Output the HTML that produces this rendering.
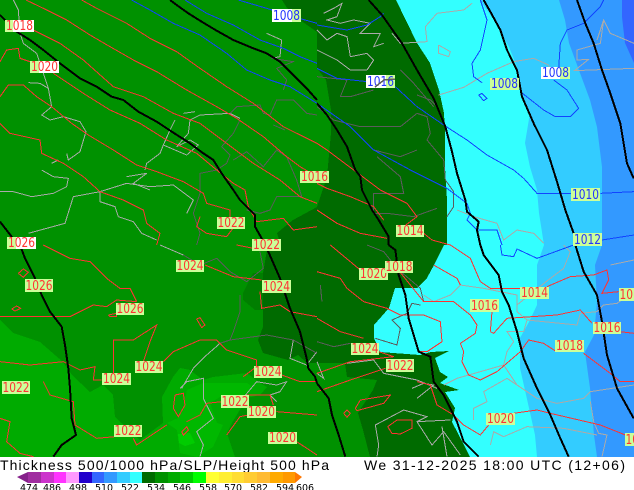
<!DOCTYPE html>
<html><head><meta charset="utf-8"><style>
html,body{margin:0;padding:0;background:#fff;width:634px;height:490px;overflow:hidden}
svg{display:block}
polyline{vector-effect:non-scaling-stroke;fill:none}
.k polyline{stroke:#000;stroke-width:2}
.r polyline{stroke:#ff3333;stroke-width:1}
.g polyline{stroke:#aaaaaa;stroke-width:1}
.d polyline{stroke:#5c5c5c;stroke-width:1}
.b polyline{stroke:#1144ff;stroke-width:1}
.lab text{font:13.5px "DejaVu Sans",sans-serif;text-anchor:middle;fill:#ff3333}
.lab text.u{fill:#2233ff}
.lab rect{fill:#ccff99}
.lab rect.w{fill:#fff}
.leg text{font:9.5px "DejaVu Sans",sans-serif;fill:#000}
.ttl{font:14px "Liberation Sans",sans-serif;fill:#000}
</style></head><body>
<svg width="634" height="490" viewBox="0 0 634 490" xmlns="http://www.w3.org/2000/svg">
<rect width="634" height="457" fill="#3399ff"/>
<polygon points="622,0 634,0 634,63 625,43 622,17" fill="#3366ff"/>
<polygon points="0,0 559,0 565,20 569,43 580,73 590,100 597,127 602,167 602,245 595,265 597,302 594,335 585,352 590,388 594,435 597,457 0,457" fill="#33ccff"/>
<polygon points="0,0 480,0 494,20 509,47 517,67 520,90 530,113 525,143 530,167 537,190 539,213 544,245 537,265 537,305 529,322 520,338 520,368 529,408 535,435 537,457 0,457" fill="#33ffff"/>
<polygon shape-rendering="crispEdges" points="0,0 396,0 417,43 430,63 439,90 444,113 445,133 445,167 447,200 447,245 444,245 434,265 427,278 417,288 395,288 389,308 374,325 374,338 380,352 420,355 431,352 449,351 435,358 440,372 448,377 440,383 459,390 445,392 455,408 452,422 464,445 470,457 0,457" fill="#006b00"/>
<polygon shape-rendering="crispEdges" points="0,0 282,0 287,8 300,20 317,32 317,68 326,80 331,110 331,133 327,177 317,207 293,220 277,233 280,243 267,250 263,273 263,310 263,327 258,340 263,353 288,360 298,355 307,363 345,363 347,377 377,380 373,390 358,413 363,430 370,457 0,457" fill="#009100"/>
<polygon shape-rendering="crispEdges" points="263,273 253,273 243,293 243,300 255,310 263,310" fill="#007e00"/>
<polygon shape-rendering="crispEdges" points="0,320 13,333 40,342 63,362 72,375 90,392 103,385 113,395 115,417 140,440 163,423 162,397 173,377 180,368 190,370 203,380 213,377 247,373 260,383 267,387 260,395 247,398 232,423 227,433 235,457 0,457" fill="#00ab00"/>
<polygon shape-rendering="crispEdges" points="187,390 203,383 213,383 247,383 253,387 243,395 220,397 210,403 217,423 223,425 213,447 197,457 180,453 177,430 167,423 178,418 183,410" fill="#00b800"/>
<polygon shape-rendering="crispEdges" points="178,434 190,433 195,443 185,446 179,443" fill="#00cc00"/>

<g shape-rendering="crispEdges">
<!-- Q1 -->
<g transform="scale(.33333)">
<g class="g">
<polyline points="40,0 55,30 60,100 70,130 110,160 130,220 145,265 120,250 85,248"/>
<polyline points="145,265 155,320 125,345 150,360 190,350 240,365 258,395 240,455 205,480 200,460"/>
<polyline points="175,480 155,490"/>
<polyline points="125,510 160,530 205,535 200,560 160,580 95,590 40,575 0,575"/>
<polyline points="300,575 220,590 195,670 85,700"/>
<polyline points="300,575 300,605 345,620 355,650 400,665 425,700 470,720"/>
<polyline points="300,575 380,550 450,560 520,555 580,600 560,640"/>
<polyline points="435,510 440,490 480,460 490,435 510,390 525,360"/>
<polyline points="490,435 560,465 595,435 570,420 530,440 565,400 570,360"/>
<polyline points="550,340 585,335"/>
<polyline points="570,360 600,345 690,340 720,355"/>
<polyline points="380,530 440,520 400,550 450,570"/>
<polyline points="800,100 845,120 840,170 815,175"/>
</g>
<g class="d">
<polyline points="690,340 710,320 780,315 790,340 810,345 830,300 880,300 920,340 951,345"/>
<polyline points="720,360 700,400 665,440 690,465 680,490 650,510 600,520 600,580 580,640 600,700 590,735"/>
<polyline points="700,480 740,455 790,500 830,450 860,470 890,540 905,590 830,590 810,630 780,640 740,630"/>
<polyline points="820,375 855,390"/>
<polyline points="815,175 880,185 830,205 860,240 850,270"/>
</g>
<g class="b">
<polyline points="395,0 450,30 520,70 600,105 680,160 740,210 810,240 870,260 951,310"/>
<polyline points="555,0 620,40 700,75 780,120 850,145 900,170 951,190"/>
<polyline points="715,0 800,25 880,50 951,70"/>
</g>
<g class="r">
<polyline points="78,0 130,25 200,60 270,105 330,140 400,180 470,215 560,270 650,320 710,355 790,410 860,470 900,500 951,530"/>
<polyline points="245,0 290,25 380,70 450,115 530,155 600,205 680,260 760,310 850,380 951,430"/>
<polyline points="100,90 180,130 250,180 340,260 430,290 520,340 600,370 680,430 760,490 840,540 900,590 951,610"/>
<polyline points="160,220 250,280 330,330 420,370 500,420 590,460 650,510 700,550 735,570 745,620 770,665 850,655 880,690 951,680"/>
<polyline points="0,185 20,150 55,145 60,175 90,185"/>
<polyline points="0,290 25,255 70,255 110,290 155,320 215,370 265,405 340,450 410,495 470,515 550,545 610,580 620,610 690,630 690,670"/>
<polyline points="0,370 30,400 120,420 125,460 190,490 250,530 300,575 370,600 430,630 440,670 480,700 470,735"/>
<polyline points="600,650 590,680 620,700 680,710 710,670"/>
</g>
<g class="k">
<polyline points="0,45 15,60 50,95 90,120 130,150 180,190 240,235 290,260 335,290 370,300 415,335 470,365 520,398 570,430 610,460 640,480 665,520 700,570 720,600 765,645 765,680 785,715 805,755"/>
<polyline points="510,0 530,15 565,40 600,62 650,92 700,120 760,145 800,160 840,185 880,225 920,265 951,300"/>
<polyline points="0,665 35,710 60,735"/>
</g>
</g>
<!-- Q2 -->
<g transform="translate(317,0) scale(.33333)">
<g class="g">
<polyline points="0,90 30,120 60,100 90,110 100,170 150,160 170,180 150,210"/>
<polyline points="0,150 60,180 100,210 150,210"/>
<polyline points="20,40 50,25 75,10 60,50 30,60 70,70 110,60 160,70 130,100 190,100 170,140 200,130"/>
<polyline points="225,100 250,130 330,125 325,80 360,40 440,30 465,10"/>
<polyline points="365,135 400,155 395,170 365,160 365,135"/>
<polyline points="365,285 440,262 510,220 590,185 650,175 695,195 700,220"/>
<polyline points="770,212 951,205"/>
<polyline points="775,210 815,178 780,180 780,150 850,130 860,60 880,100 951,130"/>
<polyline points="860,60 840,120"/>
<polyline points="420,630 470,650 540,670 560,720 600,690 650,700 680,730"/>
</g>
<g class="d">
<polyline points="0,230 90,240 70,290 100,290 170,270"/>
<polyline points="250,210 290,250 350,320"/>
<polyline points="300,285 340,300 360,320"/>
<polyline points="0,320 50,360 130,380 250,380 300,340 330,350 340,400 330,420 380,480 385,540 410,575 410,620 390,650"/>
<polyline points="170,450 250,470 300,450"/>
<polyline points="180,470 250,530 260,580 170,580 170,640 210,640 290,650 360,625"/>
</g>
<g class="b">
<polyline points="0,75 90,90 150,75 190,50 200,40"/>
<polyline points="0,205 60,235 150,245"/>
<polyline points="235,260 300,320 380,375 450,420 510,465 590,510 620,535 660,580 765,580"/>
<polyline points="850,580 951,575"/>
<polyline points="0,310 100,380 170,450 280,510 390,565 450,610 460,640 450,660 480,690 540,690 555,735"/>
<polyline points="490,0 510,60 490,150 465,190 470,230 495,248"/>
<polyline points="610,275 680,330 715,350 760,350 785,325 750,270 710,240"/>
<polyline points="725,205 730,130 750,90 800,70 850,20 860,0"/>
<polyline points="485,285 495,280 510,295 500,302 485,285"/>
<polyline points="855,720 951,705"/>
</g>
<g class="r">
<polyline points="0,430 30,450 110,510 190,570 270,610 300,650 260,680"/>
<polyline points="0,550 30,565 100,590 170,620 200,660"/>
<polyline points="0,630 60,670 130,700 210,715"/>
<polyline points="320,700 345,720 400,735"/>
</g>
<g class="k">
<polyline points="0,310 30,345 60,390 90,440 115,510 130,530 135,570 165,630 185,660 215,710 215,735"/>
<polyline points="155,0 195,45 255,130 300,210 350,295 385,380 405,455 420,520 445,600 450,635 485,665 480,690 490,735"/>
<polyline points="500,0 520,35 550,90 570,150 600,210 615,290 650,370 690,450 720,545 745,630 770,700"/>
<polyline points="780,0 805,70 830,130 855,210 880,280 910,370 930,490 950,535"/>
</g>
</g>
<!-- Q3 -->
<g transform="translate(0,245) scale(.33333)">
<g class="g">
<polyline points="480,0 550,30"/>
<polyline points="660,295 620,330 580,370 545,430"/>
<polyline points="540,430 560,410 610,400 610,460 640,520 590,560 610,600 600,635"/>
<polyline points="880,285 870,340 920,360 951,320"/>
<polyline points="720,470 770,410 830,420 860,410 840,440 810,450 830,470"/>
</g>
<g class="d">
<polyline points="550,30 600,60 650,40 690,80 740,110 790,70 780,20"/>
<polyline points="720,150 720,200 700,260 690,285 660,295"/>
<polyline points="690,285 800,270 880,285 951,325"/>
</g>
<g class="r">
<polyline points="130,0 210,40 270,50 320,100 360,130 390,130 410,170"/>
<polyline points="0,215 120,215 210,215 280,180 320,185 350,165 410,170"/>
<polyline points="0,350 90,360 190,350 240,375 285,365 280,405 305,405"/>
<polyline points="340,400 340,285 400,285 470,240 450,290 430,350"/>
<polyline points="490,350 520,320 600,285 650,285 680,315 770,345 770,365 730,395"/>
<polyline points="130,410 150,450 220,470 225,540 290,580 345,575"/>
<polyline points="0,520 30,530 20,590 60,625 100,635"/>
<polyline points="400,580 410,600 500,540"/>
<polyline points="560,530 600,510 620,475 665,470"/>
<polyline points="740,450 810,450 820,480"/>
<polyline points="830,500 951,510"/>
<polyline points="680,570 720,515 745,510"/>
<polyline points="890,590 951,630"/>
<polyline points="780,140 785,190 840,180 870,200 951,215"/>
<polyline points="710,0 760,10"/>
<polyline points="615,60 700,95 785,105"/>
<polyline points="845,390 900,410 951,410"/>
<polyline points="525,450 550,445 555,480 535,515 520,490 525,450"/>
<polyline points="545,560 560,545 565,555 550,570 545,560"/>
<polyline points="55,85 70,72 85,82 70,97 55,85"/>
<polyline points="35,192 50,183 62,190 45,198 35,192"/>
<polyline points="590,222 600,218 615,240 605,248 590,222"/>
<polyline points="325,210 350,205 350,215 330,215 325,210"/>
</g>
<g class="k">
<polyline points="60,0 75,40 105,100 125,150 150,200 185,245 195,300 205,370 210,430 215,520 228,570 185,600 160,635"/>
<polyline points="805,20 840,100 870,190 900,260 920,340 925,370 945,395 951,415"/>
</g>
</g>
<!-- Q4 -->
<g transform="translate(317,245) scale(.33333)">
<g class="g">
<polyline points="320,150 350,170 400,150 430,120 500,130 600,150 600,200 630,225 620,260 570,260 590,290 570,320 560,360 420,400 380,420"/>
<polyline points="560,360 600,420 570,400 500,440 510,470 470,490 470,525"/>
<polyline points="600,420 660,460 720,475 800,460 820,440 951,420"/>
<polyline points="820,470 830,530 845,565 870,570 855,635"/>
<polyline points="520,600 530,560 560,575 630,545 740,550 840,570"/>
<polyline points="630,225 780,240 790,205 840,200 860,180 900,175 951,140"/>
<polyline points="600,180 700,100 740,70 760,20 740,0"/>
<polyline points="880,60 951,45"/>
<polyline points="175,540 260,495 330,515 300,530 345,600 380,560 430,630"/>
<polyline points="175,540 185,600 180,635"/>
<polyline points="300,530 400,525"/>
<polyline points="375,545 390,635"/>
<polyline points="285,430 320,415 350,420 300,460"/>
<polyline points="0,350 20,400 0,385"/>
<polyline points="90,355 170,345 200,385 300,405 360,430"/>
</g>
<g class="d">
<polyline points="0,290 50,305 100,295"/>
<polyline points="10,120 15,170"/>
<polyline points="175,280 240,300 250,250 225,225 270,205 285,175 310,180"/>
<polyline points="150,0 200,20 240,70 310,130 320,170"/>
</g>
<g class="b">
<polyline points="550,0 555,30 590,35 600,12 660,40 770,0"/>
</g>
<g class="r">
<polyline points="40,0 100,50 130,75"/>
<polyline points="0,80 70,100 90,130 140,170 210,190 250,210 320,210 370,230 375,290 330,320 305,320"/>
<polyline points="240,70 320,170 410,170 460,210 480,240 475,265 430,295 440,320 435,350 455,390 490,405 540,380 610,320 635,285 680,295 715,318"/>
<polyline points="350,60 420,100 430,120"/>
<polyline points="400,0 460,40 490,110 520,130 610,130"/>
<polyline points="690,125 760,95 830,90 870,75 875,105 855,145 905,140"/>
<polyline points="520,260 525,200"/>
<polyline points="520,260 530,265 570,220 720,210 790,195 825,235"/>
<polyline points="910,260 951,265"/>
<polyline points="800,325 880,385 910,410 951,410"/>
<polyline points="0,220 70,260 140,280"/>
<polyline points="185,320 230,335 100,350 0,385"/>
<polyline points="205,370 100,405 0,440"/>
<polyline points="300,410 340,420 360,480 410,510 440,540 490,570 515,540"/>
<polyline points="590,505 660,495 700,505 850,540 925,570"/>
<polyline points="115,490 130,465 220,450 200,475 120,497 115,490"/>
<polyline points="80,505 90,495 100,505 90,517 80,505"/>
<polyline points="212,545 240,525 285,525 285,550 250,567 225,565 212,545"/>
</g>
<g class="k">
<polyline points="0,415 35,460 45,510 65,570 85,635"/>
<polyline points="215,0 235,15 245,90 265,150 275,220 290,270 305,320 340,335 350,410 380,450 420,530 440,590 485,635"/>
<polyline points="490,0 500,30 545,90 555,140 575,180 600,260 620,340 660,430 700,510 730,580 755,635"/>
<polyline points="775,0 800,80 840,150 855,230 870,330 900,430 950,520"/>
</g>
</g>
</g>

<g class="lab">
<rect x="5" y="20" width="29" height="12" class="w"/><rect x="5" y="20" width="8" height="12"/><text x="19.5" y="30" textLength="27" lengthAdjust="spacingAndGlyphs">1018</text>
<rect x="30" y="61" width="29" height="12" class="w"/><rect x="30" y="61" width="9" height="12"/><text x="44.5" y="71" textLength="27" lengthAdjust="spacingAndGlyphs">1020</text>
<rect x="272" y="9" width="29" height="13" class="w"/><rect x="292" y="9" width="9" height="13"/><text x="286.5" y="20" class="u" textLength="27" lengthAdjust="spacingAndGlyphs">1008</text>
<rect x="366" y="75" width="29" height="13" class="w"/><rect x="386" y="75" width="9" height="13"/><text x="380.5" y="86" class="u" textLength="27" lengthAdjust="spacingAndGlyphs">1016</text>
<rect x="490" y="78" width="29" height="12"/><text x="504.5" y="88" class="u" textLength="27" lengthAdjust="spacingAndGlyphs">1008</text>
<rect x="541" y="67" width="29" height="12" class="w"/><rect x="560" y="67" width="10" height="12"/><text x="555.5" y="77" class="u" textLength="27" lengthAdjust="spacingAndGlyphs">1008</text>
<rect x="571" y="188" width="29" height="13"/><text x="585.5" y="199" class="u" textLength="27" lengthAdjust="spacingAndGlyphs">1010</text>
<rect x="573" y="233" width="29" height="13"/><text x="587.5" y="244" class="u" textLength="27" lengthAdjust="spacingAndGlyphs">1012</text>
<rect x="300" y="171" width="29" height="12"/><text x="314.5" y="181" textLength="27" lengthAdjust="spacingAndGlyphs">1016</text>
<rect x="396" y="225" width="28" height="12"/><text x="410" y="235" textLength="27" lengthAdjust="spacingAndGlyphs">1014</text>
<rect x="217" y="217" width="28" height="12"/><text x="231" y="227" textLength="27" lengthAdjust="spacingAndGlyphs">1022</text>
<rect x="252" y="239" width="29" height="12"/><text x="266.5" y="249" textLength="27" lengthAdjust="spacingAndGlyphs">1022</text>
<rect x="7" y="237" width="29" height="12" class="w"/><rect x="7" y="237" width="9" height="12"/><text x="21.5" y="247" textLength="27" lengthAdjust="spacingAndGlyphs">1026</text>
<rect x="176" y="260" width="28" height="12"/><text x="190" y="270" textLength="27" lengthAdjust="spacingAndGlyphs">1024</text>
<rect x="262" y="280" width="29" height="13"/><text x="276.5" y="291" textLength="27" lengthAdjust="spacingAndGlyphs">1024</text>
<rect x="25" y="279" width="28" height="13"/><text x="39" y="290" textLength="27" lengthAdjust="spacingAndGlyphs">1026</text>
<rect x="116" y="303" width="28" height="12"/><text x="130" y="313" textLength="27" lengthAdjust="spacingAndGlyphs">1026</text>
<rect x="135" y="361" width="28" height="12"/><text x="149" y="371" textLength="27" lengthAdjust="spacingAndGlyphs">1024</text>
<rect x="102" y="373" width="29" height="12"/><text x="116.5" y="383" textLength="27" lengthAdjust="spacingAndGlyphs">1024</text>
<rect x="2" y="381" width="28" height="13"/><text x="16" y="392" textLength="27" lengthAdjust="spacingAndGlyphs">1022</text>
<rect x="254" y="366" width="28" height="12"/><text x="268" y="376" textLength="27" lengthAdjust="spacingAndGlyphs">1024</text>
<rect x="221" y="395" width="28" height="13"/><text x="235" y="406" textLength="27" lengthAdjust="spacingAndGlyphs">1022</text>
<rect x="247" y="406" width="29" height="12"/><text x="261.5" y="416" textLength="27" lengthAdjust="spacingAndGlyphs">1020</text>
<rect x="114" y="425" width="28" height="12"/><text x="128" y="435" textLength="27" lengthAdjust="spacingAndGlyphs">1022</text>
<rect x="268" y="432" width="29" height="12"/><text x="282.5" y="442" textLength="27" lengthAdjust="spacingAndGlyphs">1020</text>
<rect x="359" y="268" width="29" height="12"/><text x="373.5" y="278" textLength="27" lengthAdjust="spacingAndGlyphs">1020</text>
<rect x="385" y="261" width="28" height="12"/><text x="399" y="271" textLength="27" lengthAdjust="spacingAndGlyphs">1018</text>
<rect x="520" y="287" width="29" height="12"/><text x="534.5" y="297" textLength="27" lengthAdjust="spacingAndGlyphs">1014</text>
<rect x="470" y="299" width="29" height="13"/><text x="484.5" y="310" textLength="27" lengthAdjust="spacingAndGlyphs">1016</text>
<rect x="593" y="322" width="28" height="12"/><text x="607" y="332" textLength="27" lengthAdjust="spacingAndGlyphs">1016</text>
<rect x="555" y="340" width="29" height="12"/><text x="569.5" y="350" textLength="27" lengthAdjust="spacingAndGlyphs">1018</text>
<rect x="351" y="343" width="28" height="12"/><text x="365" y="353" textLength="27" lengthAdjust="spacingAndGlyphs">1024</text>
<rect x="386" y="359" width="28" height="13"/><text x="400" y="370" textLength="27" lengthAdjust="spacingAndGlyphs">1022</text>
<rect x="486" y="413" width="29" height="12"/><text x="500.5" y="423" textLength="27" lengthAdjust="spacingAndGlyphs">1020</text>
<rect x="619" y="288" width="15" height="13"/><text x="633" y="299" textLength="27" lengthAdjust="spacingAndGlyphs">1014</text>
<rect x="625" y="433" width="9" height="13"/><text x="639" y="444" textLength="27" lengthAdjust="spacingAndGlyphs">1020</text>
</g>
<polyline points="375,87 384,80 395,79" style="fill:none;stroke:#5c5c5c;stroke-width:1.5" shape-rendering="crispEdges"/>

<rect y="457" width="634" height="33" fill="#fff"/>
<text class="ttl" x="0" y="470" textLength="329">Thickness 500/1000 hPa/SLP/Height 500 hPa</text>
<text class="ttl" x="364" y="470" textLength="261">We 31-12-2025 18:00 UTC (12+06)</text>

<g shape-rendering="crispEdges">
<polygon points="17,477 28,472 28,483" fill="#85208a" shape-rendering="auto"/>
<rect x="28" y="472" width="13" height="11" fill="#a02da0"/>
<rect x="41" y="472" width="13" height="11" fill="#cc33cc"/>
<rect x="54" y="472" width="12" height="11" fill="#ff33ff"/>
<rect x="66" y="472" width="13" height="11" fill="#ff99ff"/>
<rect x="79" y="472" width="13" height="11" fill="#2200cc"/>
<rect x="92" y="472" width="12" height="11" fill="#3366ff"/>
<rect x="104" y="472" width="13" height="11" fill="#3399ff"/>
<rect x="117" y="472" width="13" height="11" fill="#33ccff"/>
<rect x="130" y="472" width="12" height="11" fill="#33ffff"/>
<rect x="142" y="472" width="13" height="11" fill="#006b00"/>
<rect x="155" y="472" width="13" height="11" fill="#009100"/>
<rect x="168" y="472" width="12" height="11" fill="#00ab00"/>
<rect x="180" y="472" width="13" height="11" fill="#00cc00"/>
<rect x="193" y="472" width="13" height="11" fill="#00ff00"/>
<rect x="206" y="472" width="13" height="11" fill="#ffff33"/>
<rect x="219" y="472" width="13" height="11" fill="#ffee33"/>
<rect x="232" y="472" width="12" height="11" fill="#ffdd33"/>
<rect x="244" y="472" width="13" height="11" fill="#ffcc33"/>
<rect x="257" y="472" width="13" height="11" fill="#ffbb33"/>
<rect x="270" y="472" width="13" height="11" fill="#ffaa00"/>
<rect x="283" y="472" width="12" height="11" fill="#ff9900"/>
<polygon points="295,472 302,477 295,483" fill="#ff7700" shape-rendering="auto"/>
</g>
<g class="leg">
<text x="20" y="491" textLength="18">474</text>
<text x="43" y="491" textLength="18">486</text>
<text x="69" y="491" textLength="18">498</text>
<text x="95" y="491" textLength="18">510</text>
<text x="121" y="491" textLength="18">522</text>
<text x="147" y="491" textLength="18">534</text>
<text x="173" y="491" textLength="18">546</text>
<text x="199" y="491" textLength="18">558</text>
<text x="224" y="491" textLength="18">570</text>
<text x="250" y="491" textLength="18">582</text>
<text x="276" y="491" textLength="18">594</text>
<text x="296" y="491" textLength="18">606</text>
</g>
</svg>
</body></html>
